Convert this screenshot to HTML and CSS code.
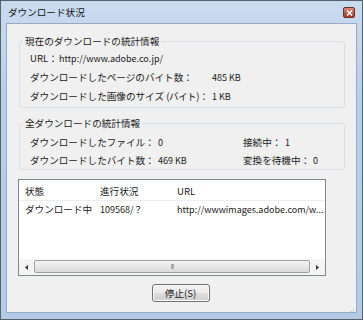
FILE: index.html
```html
<!DOCTYPE html>
<html lang="ja">
<head>
    <meta charset="UTF-8">
    <title>ダウンロード状況</title>
    <link rel="stylesheet" href="styles.css">
</head>
<body>
    <div class="window">
        <div class="titlebar">
            <span class="title">ダウンロード状況</span>
            <span class="close-btn">
                <svg width="7" height="6" viewBox="0 0 7 6"><path d="M1 0.5 L6 5.5 M6 0.5 L1 5.5" stroke="#fff" stroke-width="1.6"/></svg>
            </span>
        </div>

        <div class="client">
            <fieldset class="group group-current">
                <legend>現在のダウンロードの統計情報</legend>
                <div class="row">
                    <span class="label url-label">URL：</span>
                    <span class="value">http://www.adobe.co.jp/</span>
                </div>
                <div class="row">
                    <span class="label wide">ダウンロードしたページのバイト数：</span>
                    <span class="value">485 KB</span>
                </div>
                <div class="row">
                    <span class="label wide">ダウンロードした画像のサイズ <span class="paren">(バイト)</span>：</span>
                    <span class="value">1 KB</span>
                </div>
            </fieldset>

            <fieldset class="group group-all">
                <legend>全ダウンロードの統計情報</legend>
                <div class="row">
                    <span class="label mid">ダウンロードしたファイル：</span>
                    <span class="value col-a">0</span>
                    <span class="label conn">接続中：</span>
                    <span class="value">1</span>
                </div>
                <div class="row">
                    <span class="label mid">ダウンロードしたバイト数：</span>
                    <span class="value col-a">469 KB</span>
                    <span class="label wait">変換を待機中：</span>
                    <span class="value">0</span>
                </div>
            </fieldset>

            <div class="listview">
                <div class="list-head">
                    <span class="col col-state">状態</span>
                    <span class="col col-progress">進行状況</span>
                    <span class="col col-url">URL</span>
                </div>
                <div class="list-row">
                    <span class="col col-state">ダウンロード中</span>
                    <span class="col col-progress">109568/？</span>
                    <span class="col col-url">http://wwwimages.adobe.com/w...</span>
                </div>
                <div class="list-space"></div>
                <div class="hscroll">
                    <span class="arrow">
                        <svg width="3" height="5" viewBox="0 0 3 5"><path d="M3 0 L0 2.5 L3 5 Z" fill="#333"/></svg>
                    </span>
                    <span class="thumb"><span class="grip">III</span></span>
                    <span class="arrow">
                        <svg width="3" height="5" viewBox="0 0 3 5"><path d="M0 0 L3 2.5 L0 5 Z" fill="#333"/></svg>
                    </span>
                </div>
            </div>

            <div class="buttons">
                <button class="btn">停止(S)</button>
            </div>

            <div class="grip-corner">
                <svg width="7" height="7" viewBox="0 0 7 7">
                    <rect x="5" y="1" width="1" height="1" fill="#b8c0c8"/>
                    <rect x="3" y="3" width="1" height="1" fill="#b8c0c8"/>
                    <rect x="5" y="3" width="1" height="1" fill="#b8c0c8"/>
                    <rect x="1" y="5" width="1" height="1" fill="#b8c0c8"/>
                    <rect x="3" y="5" width="1" height="1" fill="#b8c0c8"/>
                    <rect x="5" y="5" width="1" height="1" fill="#b8c0c8"/>
                </svg>
            </div>
        </div>
    </div>
</body>
</html>
```

FILE: styles.css
```css
html, body {
    margin: 0;
    padding: 0;
}
body {
    font-family: "Noto Sans CJK JP", "Noto Sans", sans-serif;
    font-size: 9.6px;
    color: #1a1a1a;
    background: #fff;
}
.window {
    box-sizing: border-box;
    width: 363px;
    height: 320px;
    border: 1px solid #59626c;
    background: linear-gradient(180deg, #c9dbef 0%, #b9cfe8 30%, #b3cbe6 100%);
    padding: 0 5px 6px 5px;
    display: flex;
    flex-direction: column;
}
.titlebar {
    height: 22px;
    display: flex;
    align-items: center;
    justify-content: space-between;
    flex-shrink: 0;
}
.title {
    font-size: 9.6px;
    color: #111;
    margin-left: 2px;
    margin-top: -1px;
}
.close-btn {
    box-sizing: border-box;
    width: 12px;
    height: 11px;
    margin-right: 2px;
    margin-top: 1px;
    border: 1px solid #6b3027;
    border-radius: 2px;
    background: linear-gradient(180deg, #dc8e7c 0%, #c25843 50%, #a93a25 100%);
    display: flex;
    align-items: center;
    justify-content: center;
}
.client {
    flex: 1;
    background: #f0f0f0;
    border: 1px solid #95acc6;
    padding: 0 12px 0 11px;
    position: relative;
}
.group {
    margin: 10px 0 0 1px;
    width: 326px;
    box-sizing: border-box;
    border: 1px solid #dadfe3;
    border-radius: 3px;
    padding: 0 10px 1px 10px;
}
.group legend {
    margin-left: -7px;
    padding: 0 2px;
    line-height: 14px;
    font-size: 9.6px;
    color: #1a1a1a;
}
.group-current {
    padding-top: 1px;
}
.group-all {
    margin-top: 8px;
    padding-top: 3px;
    padding-bottom: 0;
}
.row {
    display: flex;
    height: 18px;
    align-items: center;
    margin-bottom: 1px;
}
.group-all .row {
    margin-bottom: 0;
}
.label {
    white-space: nowrap;
    flex-shrink: 0;
}
.url-label {
    width: 29px;
}
.wide {
    width: 182px;
}
.mid {
    width: 128px;
}
.conn {
    width: 42px;
}
.wait {
    width: 70px;
}
.paren {
    letter-spacing: -0.5px;
}
.value {
    font-size: 9px;
    white-space: nowrap;
}
.col-a {
    width: 85px;
}
.listview {
    margin-top: 9px;
    width: 308px;
    height: 97px;
    box-sizing: border-box;
    border: 1px solid #828790;
    background: #fff;
    display: flex;
    flex-direction: column;
}
.list-head {
    display: flex;
    height: 19px;
    padding-top: 1px;
    align-items: center;
    border-bottom: 1px solid #eaeef2;
}
.list-row {
    display: flex;
    height: 16px;
    align-items: center;
}
.col {
    white-space: nowrap;
}
.col-state {
    width: 75px;
    padding-left: 6px;
}
.col-progress {
    width: 77px;
}
.list-row .col-progress,
.list-row .col-url {
    font-size: 9px;
}
.list-space {
    flex: 1;
}
.hscroll {
    display: flex;
    height: 16px;
    background: #f4f4f4;
    align-items: stretch;
}
.arrow {
    width: 15px;
    display: flex;
    align-items: center;
    justify-content: center;
}
.thumb {
    flex: 1;
    box-sizing: border-box;
    margin: 1px 0 2px 0;
    border: 1px solid #a0a0a0;
    border-radius: 2px;
    background: linear-gradient(180deg, #f4f4f4 0%, #e8e8e8 50%, #d9d9d9 100%);
    display: flex;
    align-items: center;
    justify-content: center;
}
.grip {
    font-size: 6px;
    letter-spacing: -1px;
    color: #777;
    line-height: 1;
}
.buttons {
    display: flex;
    justify-content: center;
    margin-top: 8px;
    padding-right: 1px;
}
.btn {
    width: 58px;
    height: 18px;
    padding: 0;
    font-family: "Noto Sans CJK JP", "Noto Sans", sans-serif;
    font-size: 9.6px;
    color: #1a1a1a;
    border: 1px solid #707070;
    border-radius: 3px;
    background: linear-gradient(180deg, #f2f2f2 0%, #ebebeb 50%, #dddddd 51%, #cfcfcf 100%);
    box-shadow: inset 0 0 0 1px #fcfcfc;
}
.grip-corner {
    position: absolute;
    right: 1px;
    bottom: 1px;
    width: 7px;
    height: 7px;
}
```
